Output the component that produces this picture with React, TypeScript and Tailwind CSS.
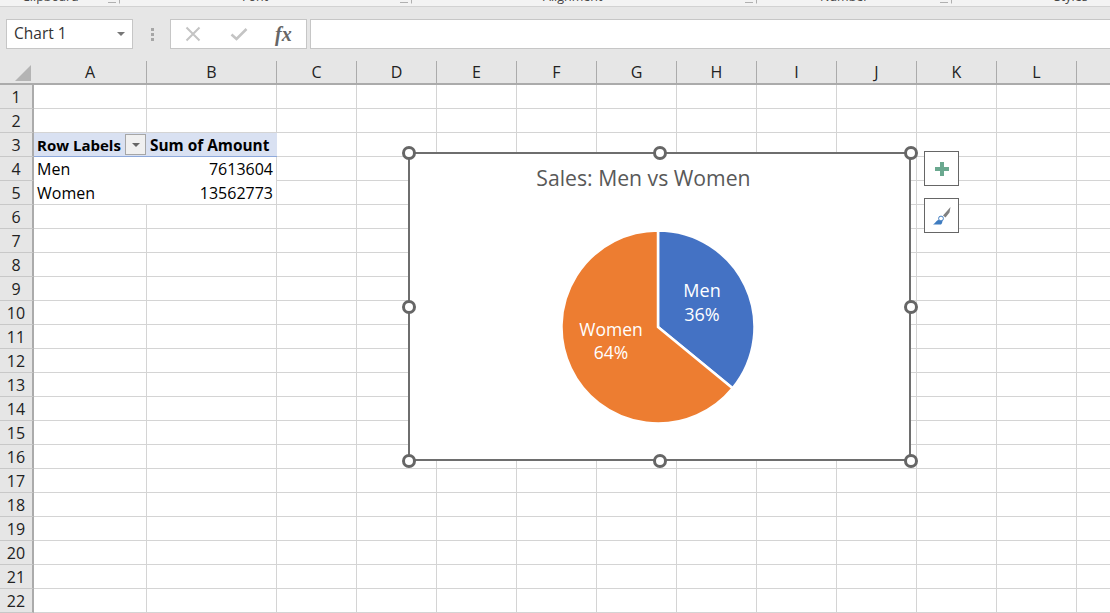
import type { ReactNode } from "react";

const COLS: [string, number][] = [["A",113],["B",130],["C",80],["D",80],["E",80],["F",80],["G",80],["H",80],["I",80],["J",80],["K",80],["L",80],["",33]];
const ROWS = Array.from({ length: 22 }, (_, i) => i + 1);

function Handle({ className }: { className: string }) {
  return <div className={`absolute w-[14px] h-[14px] rounded-full border-[3px] border-[#666666] bg-white ${className}`} />;
}

function Launcher() {
  return (
    <svg width="12" height="4" viewBox="0 0 12 4" className="block">
      <path d="M0 2.5H8M11.5 0V3.5" fill="none" stroke="#b0b0b0" />
    </svg>
  );
}

function Ribbon() {
  const label = "text-[12.5px] leading-[13px] text-[#444] -mt-[10px] whitespace-nowrap";
  return (
    <div className="h-[7px] shrink-0 bg-[#f3f3f3] border-b border-[#d2d2d2] overflow-hidden flex items-start">
      <div className={`${label} ml-[22px] w-[86px]`}>Clipboard</div>
      <div className="w-[134px]"><Launcher /></div>
      <div className={`${label} w-[158px]`}>Font</div>
      <div className="w-[143px]"><Launcher /></div>
      <div className={`${label} w-[202px]`}>Alignment</div>
      <div className="w-[75px]"><Launcher /></div>
      <div className={`${label} w-[120px]`}>Number</div>
      <div className="w-[114px]"><Launcher /></div>
      <div className={label}>Styles</div>
    </div>
  );
}

function FormulaBar() {
  return (
    <div className="h-[54px] shrink-0 bg-[#e6e6e6] flex items-start pt-[12px]">
      <div className="ml-[6px] w-[127px] h-[30px] bg-white border border-[#c6c6c6] flex items-center justify-between pl-[7px] pr-[7px] text-[15.5px] text-[#333]">
        <span>Chart 1</span>
        <svg width="8" height="4" viewBox="0 0 8 4"><path d="M0 0H8L4 4Z" fill="#777" /></svg>
      </div>
      <div className="w-[37px] h-[30px] flex items-center justify-center">
        <div className="flex flex-col gap-[2px] ml-[1px]">
          <div className="w-[3px] h-[3px] bg-[#a6a6a6]" />
          <div className="w-[3px] h-[3px] bg-[#a6a6a6]" />
          <div className="w-[3px] h-[3px] bg-[#a6a6a6]" />
        </div>
      </div>
      <div className="w-[137px] h-[30px] bg-white border border-[#c6c6c6] flex items-center">
        <svg width="16" height="16" viewBox="0 0 16 16" className="ml-[14px]"><path d="M1.5 1.5L14.5 14.5M14.5 1.5L1.5 14.5" stroke="#c4c4c4" strokeWidth="2" /></svg>
        <svg width="18" height="14" viewBox="0 0 18 14" className="ml-[29px]"><path d="M1.5 7.5L6.5 12L16.5 2" fill="none" stroke="#c4c4c4" strokeWidth="2.6" /></svg>
        <span className="ml-[27px] font-['Liberation_Serif',serif] italic font-bold text-[20px] leading-none text-[#666]">fx</span>
      </div>
      <div className="ml-[3px] flex-1 h-[30px] bg-white border border-[#c6c6c6] border-r-0" />
    </div>
  );
}

function Header() {
  return (
    <div className="flex h-[24px] shrink-0 bg-[#e6e6e6] border-b-2 border-[#ababab]">
      <div className="w-[34px] shrink-0 relative">
        <svg width="16" height="16" viewBox="0 0 16 16" className="absolute left-[15px] top-[4px]"><path d="M16 0V16H0Z" fill="#b4b4b4" /></svg>
      </div>
      {COLS.map(([n, w], i) => (
        <div
          key={i}
          style={{ width: w }}
          className={`shrink-0 flex items-center justify-center text-[16px] text-[#222] ${n ? "border-r border-[#ababab]" : ""}`}
        >
          {n}
        </div>
      ))}
    </div>
  );
}

function Cell({ w, children, className }: { w: number; children?: ReactNode; className: string }) {
  return (
    <div style={{ width: w }} className={`shrink-0 h-full whitespace-nowrap flex items-center px-[3px] text-[16px] text-black ${className}`}>
      {children}
    </div>
  );
}

function cellClass(c: string, n: number) {
  const last = c === "";
  if (c === "A") {
    if (n === 3) return "bg-[#d9e1f2] border-b border-[#8ea9db]";
    if (n === 4) return "";
    if (n === 5) return "border-b border-[#d4d4d4]";
  }
  if (c === "B") {
    if (n === 3) return "bg-[#d9e1f2] border-b border-[#8ea9db]";
    if (n === 4) return "border-r border-[#d4d4d4]";
    if (n === 5) return "border-r border-b border-[#d4d4d4]";
  }
  return last ? "border-b border-[#d4d4d4]" : "border-r border-b border-[#d4d4d4]";
}

function Row({ n }: { n: number }) {
  return (
    <div className="flex h-[24px] shrink-0">
      <div className="w-[34px] shrink-0 bg-[#e6e6e6] border-r-2 border-b border-r-[#ababab] border-b-[#c8c8c8] flex items-center justify-center text-[16px] text-[#222]">{n}</div>
      {COLS.map(([c, w], i) => {
        let content: ReactNode = null;
        if (c === "A" && n === 3) content = (
          <>
            <span className="font-bold text-[15px] pt-[2px]">Row Labels</span>
            <span className="ml-auto -mr-[2px] w-[21px] h-[21px] bg-[#f0f0f0] border border-[#a6a6a6] flex items-center justify-center">
              <svg width="8" height="4" viewBox="0 0 8 4"><path d="M0 0H8L4 4Z" fill="#666" /></svg>
            </span>
          </>
        );
        if (c === "A" && n === 4) content = "Men";
        if (c === "A" && n === 5) content = "Women";
        if (c === "B" && n === 3) content = <span className="font-bold text-[15.4px] pt-[2px]">Sum of Amount</span>;
        if (c === "B" && n === 4) content = <span className="ml-auto">7613604</span>;
        if (c === "B" && n === 5) content = <span className="ml-auto">13562773</span>;
        return <Cell key={i} w={w} className={cellClass(c, n)}>{content}</Cell>;
      })}
    </div>
  );
}

function Chart() {
  return (
    <div className="absolute left-[408px] top-[152px] w-[503px] h-[309px] bg-white border-2 border-[#6e6e6e]">
      <div className="text-center text-[21.2px] leading-[28px] mt-[10px] text-[#595959] pr-[32px]">Sales: Men vs Women</div>
      <svg width="204" height="204" viewBox="-102 -102 204 204" className="absolute left-[146px] top-[71px]">
        <path d="M0 0L0 -96.5A96.5 96.5 0 0 1 74.6 61.2Z" fill="#4472c4" stroke="#fff" strokeWidth="2.5" />
        <path d="M0 0L74.6 61.2A96.5 96.5 0 1 1 0 -96.5Z" fill="#ed7d31" stroke="#fff" strokeWidth="2.5" />
      </svg>
      <div className="absolute left-[272px] top-[124px] w-[40px] flex flex-col items-center text-white text-[18px] leading-[24px]">
        <span>Men</span><span>36%</span>
      </div>
      <div className="absolute left-[161px] top-[164px] w-[80px] flex flex-col items-center text-white text-[17.5px] leading-[23px]">
        <span>Women</span><span>64%</span>
      </div>
    </div>
  );
}

export default function App() {
  return (
    <div className="w-[1110px] h-[613px] overflow-hidden bg-white flex flex-col relative font-['Open_Sans','Noto_Sans',sans-serif]">
      <Ribbon />
      <FormulaBar />
      <Header />
      <div className="flex flex-col">
        {ROWS.map((n) => <Row key={n} n={n} />)}
      </div>
      <Chart />
      <Handle className="left-[402px] top-[146px]" />
      <Handle className="left-[653px] top-[146px]" />
      <Handle className="left-[904px] top-[146px]" />
      <Handle className="left-[402px] top-[300px]" />
      <Handle className="left-[904px] top-[300px]" />
      <Handle className="left-[402px] top-[454px]" />
      <Handle className="left-[653px] top-[454px]" />
      <Handle className="left-[904px] top-[454px]" />
      <div className="absolute left-[924px] top-[151px] w-[35px] h-[35px] bg-white border border-[#666] flex items-center justify-center">
        <svg width="14" height="14" viewBox="0 0 14 14"><path d="M5 0H9V5H14V9H9V14H5V9H0V5H5Z" fill="#6aa88f" /></svg>
      </div>
      <div className="absolute left-[924px] top-[198px] w-[35px] h-[35px] bg-white border border-[#666] flex items-center justify-center">
        <svg width="20" height="20" viewBox="0 0 20 20">
          <path d="M18.5 1L17.5 6.5L13.5 11.5L11 9.5L15 5Z" fill="#808080" />
          <path d="M1 18.5C3 17.5 4 15 6 14L10.5 14.5C10.5 16 10 17.5 9 18.5Z" fill="#3f7cc0" />
          <circle cx="9" cy="12.5" r="2.4" fill="#fff" stroke="#3f7cc0" />
        </svg>
      </div>
    </div>
  );
}
